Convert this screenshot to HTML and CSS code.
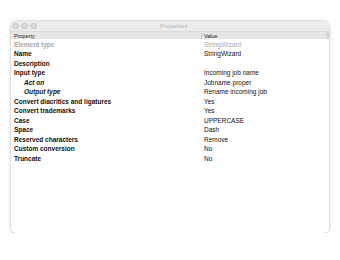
FILE: index.html
```html
<!doctype html>
<html>
<head>
<meta charset="utf-8">
<title>Properties</title>
<link rel="stylesheet" href="styles.css">
</head>
<body>
<div class="window">
  <div class="titlebar">
    <div class="lights"><span></span><span></span><span></span></div>
    <div class="title">Properties</div>
  </div>
  <div class="head">
    <div class="col-prop">Property</div>
    <div class="col-val">Value</div>
    <div class="scroll"></div>
  </div>
  <div class="rows">
    <div class="row dim"><div class="col-prop">Element type</div><div class="col-val">StringWizard</div></div>
    <div class="row"><div class="col-prop">Name</div><div class="col-val">StringWizard</div></div>
    <div class="row"><div class="col-prop">Description</div><div class="col-val"></div></div>
    <div class="row"><div class="col-prop">Input type</div><div class="col-val">Incoming job name</div></div>
    <div class="row sub"><div class="col-prop">Act on</div><div class="col-val">Jobname proper</div></div>
    <div class="row sub"><div class="col-prop">Output type</div><div class="col-val">Rename incoming job</div></div>
    <div class="row"><div class="col-prop">Convert diacritics and ligatures</div><div class="col-val">Yes</div></div>
    <div class="row"><div class="col-prop">Convert trademarks</div><div class="col-val">Yes</div></div>
    <div class="row"><div class="col-prop">Case</div><div class="col-val">UPPERCASE</div></div>
    <div class="row"><div class="col-prop">Space</div><div class="col-val">Dash</div></div>
    <div class="row"><div class="col-prop">Reserved characters</div><div class="col-val">Remove</div></div>
    <div class="row"><div class="col-prop">Custom conversion</div><div class="col-val">No</div></div>
    <div class="row"><div class="col-prop">Truncate</div><div class="col-val">No</div></div>
  </div>
</div>
</body>
</html>
```
FILE: styles.css
```css
body{
        margin:0;
        background:#fff;
        font-family:"Liberation Sans", Arial, sans-serif;
        color:#111;
}
.window{
        margin:21px 0 0 11px;
        width:318px;
        height:212px;
        background:#fff;
        border-radius:5px;
        box-shadow:0 0 0 0.5px #cdcdcd, 0 1px 5px rgba(0,0,0,0.16);
        overflow:hidden;
}
.titlebar{
        height:10px;
        background:#ececec;
        border-bottom:1px solid #dcdcdc;
        display:flex;
        align-items:center;
        position:relative;
}
.lights{
        display:flex;
        gap:2.5px;
        padding-left:1px;
}
.lights span{
        width:4.5px;
        height:4.5px;
        border-radius:50%;
        background:#dadada;
        border:0.5px solid #c9c9c9;
}
.title{
        flex:1;
        text-align:center;
        font-size:6px;
        color:#b4b4b4;
        margin-right:18px;
}
.head{
        height:7px;
        background:#e6e6e6;
        display:flex;
        align-items:center;
        font-size:5.5px;
        color:#222;
}
.head .col-val{
        border-left:1px solid #c4c4c4;
        padding-left:2px;
        margin-left:-3px;
        height:6px;
        line-height:6px;
}
.scroll{
        width:3px;
        height:7px;
        background:#d6d6d6;
}
.col-prop{
        width:190px;
        padding-left:3px;
}
.col-val{
        flex:1;
}
.row{
        height:9.5px;
        display:flex;
        align-items:center;
        font-size:6.5px;
}
.row:first-child{
        margin-top:0.5px;
}
.row .col-prop{
        font-weight:bold;
}
.row.dim{
        color:#a9a9a9;
}
.row.sub .col-prop{
        font-style:italic;
        padding-left:13px;
        width:180px;
}
```
